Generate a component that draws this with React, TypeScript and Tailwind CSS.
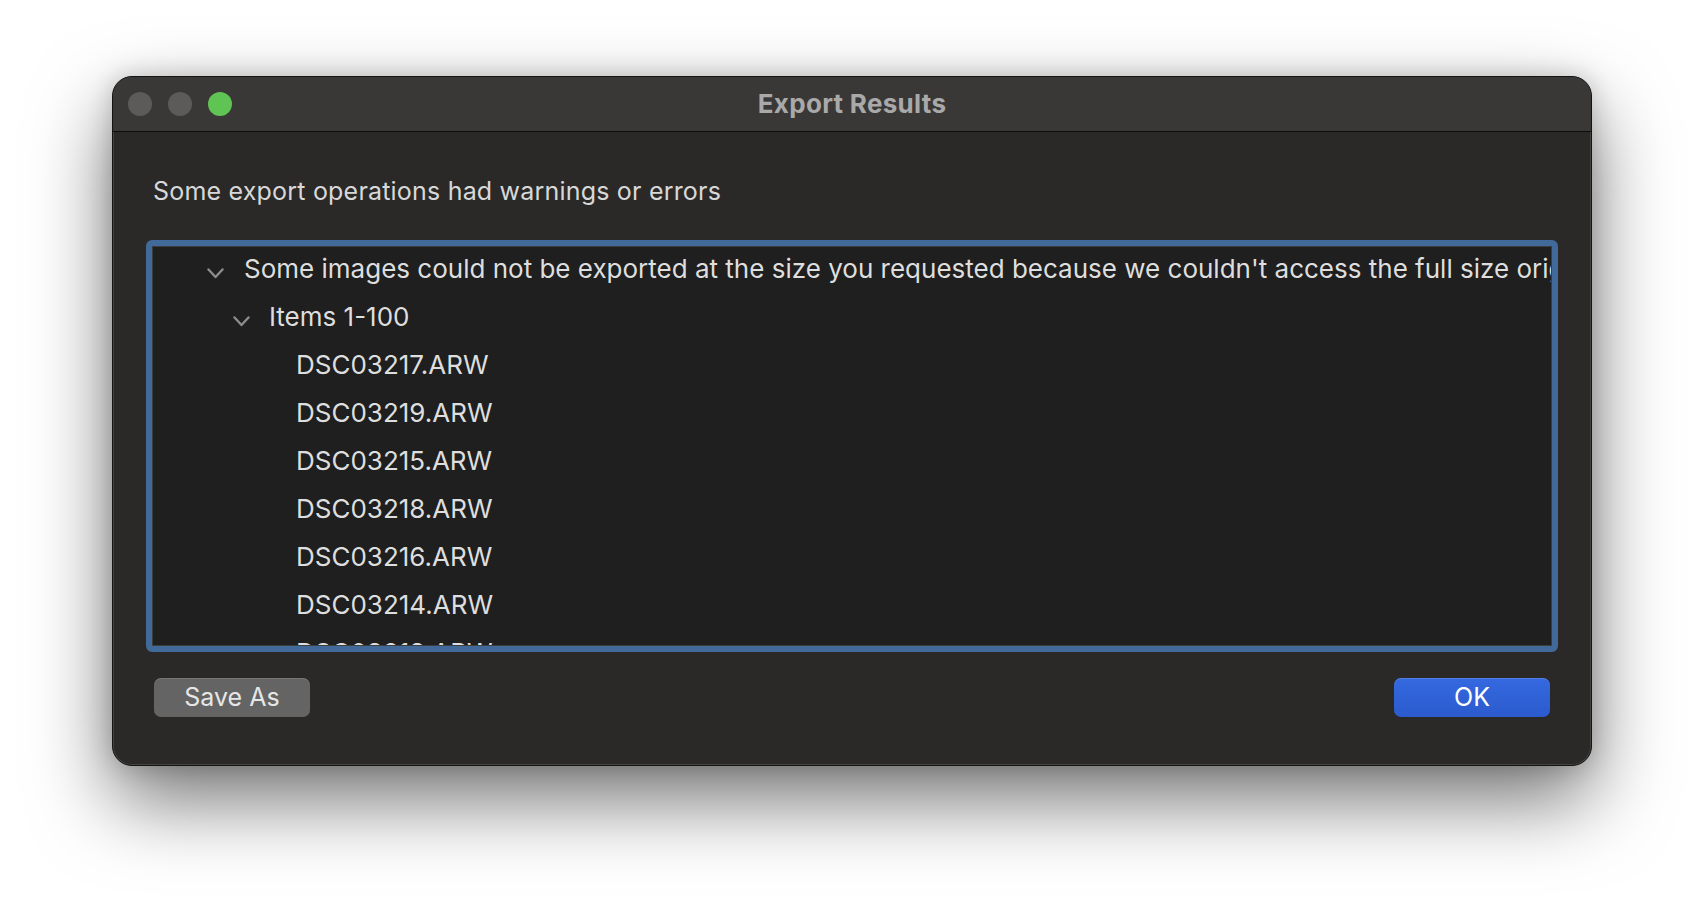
import React from "react";

function Chevron() {
  return (
    <svg width="17" height="11" viewBox="0 0 17 11" className="shrink-0">
      <polyline points="1.5,1.5 8.5,9 15.5,1.5" fill="none" stroke="#8c8c8c" strokeWidth="2.4" strokeLinecap="round" strokeLinejoin="round" />
    </svg>
  );
}

const files = [
  "DSC03217.ARW",
  "DSC03219.ARW",
  "DSC03215.ARW",
  "DSC03218.ARW",
  "DSC03216.ARW",
  "DSC03214.ARW",
  "DSC03213.ARW",
];

export default function App() {
  return (
    <div className="min-h-screen w-full bg-white pt-[76px] font-['Inter','Noto_Sans',sans-serif]">
      <div className="mx-auto flex h-[690px] w-[1480px] flex-col overflow-hidden rounded-[20px] border border-[#141414] bg-[#2a2928] shadow-[0_34px_80px_rgba(0,0,0,0.55),0_0_24px_rgba(0,0,0,0.18),inset_0_0_0_1px_rgba(255,255,255,0.12)]">
        {/* Title bar */}
        <div className="grid h-[55px] shrink-0 grid-cols-[1fr_auto_1fr] items-center border-b border-[#0d0d0d] bg-[#393837]">
          <div className="flex items-center gap-[16px] pl-[15px]">
            <span className="h-[24px] w-[24px] rounded-full bg-[#5c5b5a]" />
            <span className="h-[24px] w-[24px] rounded-full bg-[#5c5b5a]" />
            <span className="h-[24px] w-[24px] rounded-full bg-[#5fc454]" />
          </div>
          <div className="text-[26px] font-bold leading-[30px] tracking-[0.3px] text-[#a9a9a9]">Export Results</div>
          <div />
        </div>

        {/* Content */}
        <div className="flex flex-1 flex-col px-[33px]">
          <div className="mt-[44px] pl-[7px] text-[25px] leading-[30px] tracking-[0.2px] text-[#d8d8d8]">
            Some export operations had warnings or errors
          </div>

          <div className="mt-[34px] h-[412px] overflow-hidden rounded-[6px] border-[6px] border-[#41699a]">
            <div className="h-full overflow-hidden border border-[#3d3d3d] bg-[#1f1f1f] text-[26px] text-[#dedede]">
              <div className="flex h-[48px] items-start whitespace-nowrap pl-[54px]">
                <span className="mt-[21px]"><Chevron /></span>
                <span className="ml-[20px] leading-[44px]">
                  Some images could not be exported at the size you requested because we couldn't access the full size original
                </span>
              </div>
              <div className="flex h-[48px] items-start whitespace-nowrap pl-[80px]">
                <span className="mt-[21px]"><Chevron /></span>
                <span className="ml-[19px] leading-[44px]">Items 1-100</span>
              </div>
              {files.map((f) => (
                <div key={f} className="h-[48px] whitespace-nowrap pl-[143px] leading-[44px]">
                  {f}
                </div>
              ))}
            </div>
          </div>

          <div className="mt-[26px] flex items-center justify-between px-[8px]">
            <button className="h-[39px] w-[156px] rounded-[7px] bg-[#646464] text-[25px] leading-[39px] text-[#e6e6e6] shadow-[inset_0_1px_0_rgba(255,255,255,0.12)]">
              Save As
            </button>
            <button className="h-[39px] w-[156px] rounded-[7px] bg-gradient-to-b from-[#3569e0] to-[#2b5bcd] text-[25px] leading-[39px] text-white shadow-[inset_0_1px_0_rgba(255,255,255,0.15)]">
              OK
            </button>
          </div>
        </div>
      </div>
    </div>
  );
}
